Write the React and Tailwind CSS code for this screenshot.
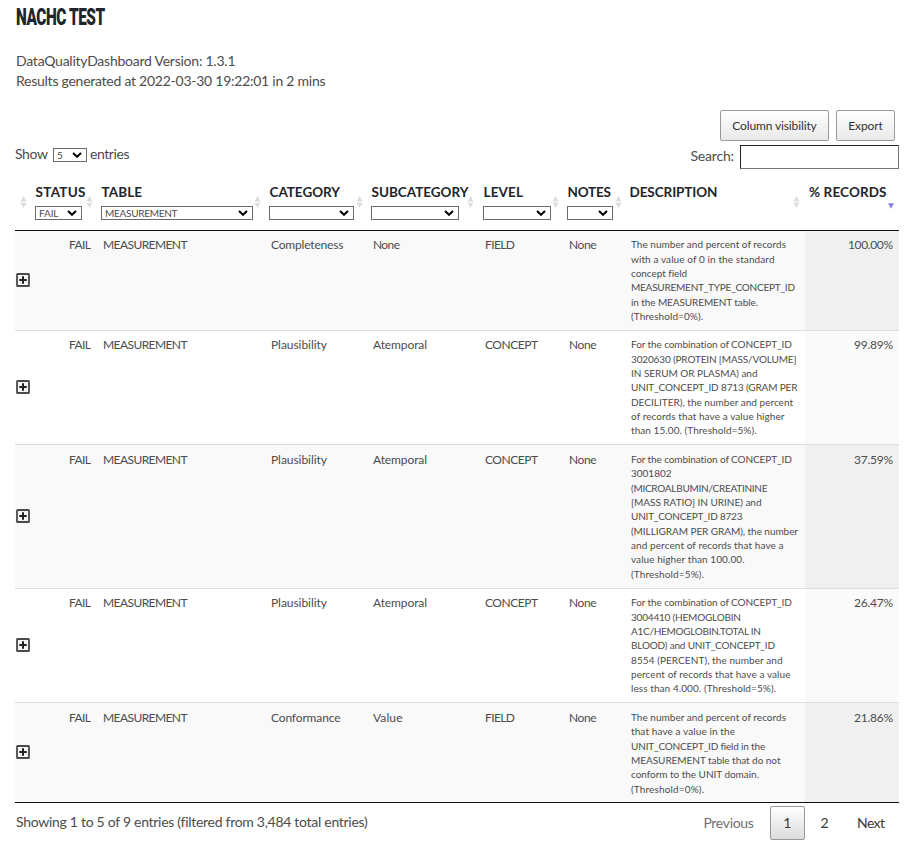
import React, { useLayoutEffect, useRef, useState } from "react";

// Single line of text, tracked so that it spans `w` pixels.
function Fit({ w, children, className = "" }) {
  const ref = useRef(null);
  const [ls, setLs] = useState(0);
  useLayoutEffect(() => {
    const n = String(children).length;
    setLs((w - ref.current.getBoundingClientRect().width) / Math.max(1, n - 1));
  }, []);
  return (
    <span
      ref={ref}
      className={`inline-block whitespace-nowrap ${className}`}
      style={{ letterSpacing: ls + "px", marginRight: -ls + "px" }}
    >
      {children}
    </span>
  );
}

function Select({ value, vw, className }) {
  return (
    <div className={`flex h-[14px] items-center justify-between border border-[#6b6b6b] bg-white pl-[3px] pr-[4px] text-[10px] leading-[12px] text-[#4c4c4c] ${className}`}>
      <span>{value ? <Fit w={vw}>{value}</Fit> : null}</span>
      <svg width="10" height="6" viewBox="0 0 10 6" fill="none" className="shrink-0">
        <path d="M1 1 L5 4.8 L9 1" stroke="#000" strokeWidth="2" />
      </svg>
    </div>
  );
}

function Sort({ className }) {
  return (
    <svg width="7" height="12" viewBox="0 0 7 12" className={`absolute top-[17px] ${className}`}>
      <path d="M3.5 0 L6.5 5.4 H0.5 Z M0.5 6.8 H6.5 L3.5 12 Z" fill="#dcdcdc" />
    </svg>
  );
}

const GRID = "grid grid-cols-[16px_66px_168px_102px_112px_84px_62px_180px_94px]";

const HEAD = [
  { t: "STATUS", w: 50, sel: "w-[47px]", value: "FAIL", vw: 19.5, sort: "right-[4px]" },
  { t: "TABLE", w: 40.5, sel: "w-[152px]", value: "MEASUREMENT", vw: 72.5, sort: "right-[4px]" },
  { t: "CATEGORY", w: 70.5, sel: "w-[85px]", sort: "right-[4px]" },
  { t: "SUBCATEGORY", w: 97, sel: "w-[88px]", sort: "right-[5px]" },
  { t: "LEVEL", w: 39.5, sel: "w-[68px]", sort: "right-[4px]" },
  { t: "NOTES", w: 43.5, sel: "w-[46px]", sort: "right-[3px]" },
  { t: "DESCRIPTION", w: 88, sort: "right-[5px]" },
];

const ROWS = [
  {
    h: "h-[100px]", cat: ["Completeness", 72.5], sub: ["None", 27], level: ["FIELD", 30], pct: ["100.00%", 45],
    desc: [
      ["The number and percent of records", 155],
      ["with a value of 0 in the standard", 143.5],
      ["concept field", 56],
      ["MEASUREMENT_TYPE_CONCEPT_ID", 164],
      ["in the MEASUREMENT table.", 127],
      ["(Threshold=0%).", 72],
    ],
  },
  {
    h: "h-[114px]", cat: ["Plausibility", 56], sub: ["Atemporal", 54], level: ["CONCEPT", 53], pct: ["99.89%", 39],
    desc: [
      ["For the combination of CONCEPT_ID", 161],
      ["3020630 (PROTEIN [MASS/VOLUME]", 165.5],
      ["IN SERUM OR PLASMA) and", 126.5],
      ["UNIT_CONCEPT_ID 8713 (GRAM PER", 166.5],
      ["DECILITER), the number and percent", 162],
      ["of records that have a value higher", 153.5],
      ["than 15.00. (Threshold=5%).", 125.5],
    ],
  },
  {
    h: "h-[144px]", low: true, cat: ["Plausibility", 56], sub: ["Atemporal", 54], level: ["CONCEPT", 53], pct: ["37.59%", 39],
    desc: [
      ["For the combination of CONCEPT_ID", 161],
      ["3001802", 40.5],
      ["(MICROALBUMIN/CREATININE", 136.5],
      ["[MASS RATIO] IN URINE) and", 130.5],
      ["UNIT_CONCEPT_ID 8723", 111.5],
      ["(MILLIGRAM PER GRAM), the number", 167],
      ["and percent of records that have a", 152.5],
      ["value higher than 100.00.", 113.5],
      ["(Threshold=5%).", 73],
    ],
  },
  {
    h: "h-[114px]", cat: ["Plausibility", 56], sub: ["Atemporal", 54], level: ["CONCEPT", 53], pct: ["26.47%", 39],
    desc: [
      ["For the combination of CONCEPT_ID", 161],
      ["3004410 (HEMOGLOBIN", 110],
      ["A1C/HEMOGLOBIN.TOTAL IN", 130],
      ["BLOOD) and UNIT_CONCEPT_ID", 144],
      ["8554 (PERCENT), the number and", 151.5],
      ["percent of records that have a value", 159.5],
      ["less than 4.000. (Threshold=5%).", 145],
    ],
  },
  {
    h: "h-[100px]", low: true, cat: ["Conformance", 69.5], sub: ["Value", 29.5], level: ["FIELD", 30], pct: ["21.86%", 39],
    desc: [
      ["The number and percent of records", 155],
      ["that have a value in the", 104],
      ["UNIT_CONCEPT_ID field in the", 134],
      ["MEASUREMENT table that do not", 149.5],
      ["conform to the UNIT domain.", 128],
      ["(Threshold=0%).", 73],
    ],
  },
];

function Cell({ v, pt }) {
  return (
    <div className={`pl-[6px] ${pt}`}>
      <Fit w={v[1]}>{v[0]}</Fit>
    </div>
  );
}

function Row({ r, i }) {
  const odd = i % 2 === 0;
  const last = i === ROWS.length - 1;
  const pt = r.low ? "pt-[6px]" : "pt-[5px]";
  return (
    <div className={`${GRID} ${r.h} border-b text-[12px] leading-[17px] text-[#4c4c4c] ${last ? "border-[#111]" : "border-[#ddd]"} ${odd ? "bg-[#f9f9f9]" : "bg-white"}`}>
      <div className="flex items-center pb-px pl-px">
        <svg width="14" height="14" viewBox="0 0 14 14" className="shrink-0">
          <rect x="1" y="1" width="12" height="12" rx="0.6" fill="#f4f4f4" stroke="#4a4a4a" strokeWidth="1.8" />
          <path d="M3.3 7 H10.7 M7 3.3 V10.7" stroke="#222" strokeWidth="2" />
        </svg>
      </div>
      <div className={`pr-[6px] text-right ${pt}`}><Fit w={22}>FAIL</Fit></div>
      <Cell v={["MEASUREMENT", 84.5]} pt={pt} />
      <Cell v={r.cat} pt={pt} />
      <Cell v={r.sub} pt={pt} />
      <Cell v={r.level} pt={pt} />
      <Cell v={["None", 27.5]} pt={pt} />
      <div className={`pl-[6px] text-[10px] leading-[14.35px] ${r.low ? "pt-[7px]" : "pt-[6.3px]"}`}>
        {r.desc.map(([t, w]) => (
          <div key={t} className="h-[14.35px]"><Fit w={w}>{t}</Fit></div>
        ))}
      </div>
      <div className={`pr-[6px] text-right ${pt} ${odd ? "bg-[#f0f0f0]" : "bg-[#fafafa]"}`}>
        <Fit w={r.pct[1]}>{r.pct[0]}</Fit>
      </div>
    </div>
  );
}

export default function App() {
  return (
    <div className="h-[858px] w-[906px] overflow-hidden bg-white pl-[15px] font-['Lato',sans-serif] text-[14px] leading-[20px] text-[#4c4c4c]">
      <div className="h-[51px] pl-px pt-[3px]">
        <h1 className="w-[150px] origin-left scale-x-[0.64] whitespace-nowrap font-['Roboto',sans-serif] text-[24px] font-black leading-[29px] text-[#212529]">
          <Fit w={87}>NACHC TEST</Fit>
        </h1>
      </div>
      <div className="h-[59px] pl-px">
        <div className="h-[20px]"><Fit w={219.5}>DataQualityDashboard Version: 1.3.1</Fit></div>
        <div className="h-[20px]"><Fit w={309.5}>Results generated at 2022-03-30 19:22:01 in 2 mins</Fit></div>
      </div>

      <div className="flex h-[69px] w-[884px] justify-between">
        <div className="mt-[35px] flex h-[20px] items-center">
          <span className="pb-[2px]"><Fit w={33}>Show</Fit></span>
          <Select value="5" vw={6} className="ml-[5px] w-[34px]" />
          <span className="ml-[3px] pb-[2px]"><Fit w={39.5}>entries</Fit></span>
        </div>
        <div className="flex flex-col items-end">
          <div className="mr-[4px] flex gap-[7px] text-[12px] text-[#333]">
            <button className="flex h-[31px] w-[109px] items-center justify-center rounded-[2px] border border-[#999] bg-linear-to-b from-white to-[#e9e9e9]"><Fit w={84.5}>Column visibility</Fit></button>
            <button className="flex h-[31px] w-[59px] items-center justify-center rounded-[2px] border border-[#999] bg-linear-to-b from-white to-[#e9e9e9]"><Fit w={34.5}>Export</Fit></button>
          </div>
          <div className="mt-[4px] flex items-center">
            <span className="pb-[2px]"><Fit w={43.5}>Search:</Fit></span>
            <div className="ml-[6px] h-[24px] w-[159px] border border-b-[#767676] border-l-[#222] border-r-[#767676] border-t-[#222] bg-white" />
          </div>
        </div>
      </div>

      <div className="w-[884px]">
        <div className={`${GRID} h-[52px] border-b border-[#111] text-[13.5px] font-bold leading-[20px] text-[#212529]`}>
          <div className="relative"><Sort className="right-[4px]" /></div>
          {HEAD.map((h) => (
            <div key={h.t} className="relative pl-[4px] pt-[3px]">
              <div className="h-[24px] pl-[0.5px]"><Fit w={h.w}>{h.t}</Fit></div>
              {h.sel ? <Select value={h.value} vw={h.vw} className={`font-normal ${h.sel}`} /> : null}
              <Sort className={h.sort} />
            </div>
          ))}
          <div className="relative pl-[4px] pt-[3px]">
            <Fit w={77.5}>% RECORDS</Fit>
            <svg width="6" height="6" viewBox="0 0 6 6" className="absolute right-[5px] top-[24px]">
              <path d="M0 0.2 H6 L3 5.8 Z" fill="#8080e0" />
            </svg>
          </div>
        </div>
        {ROWS.map((r, i) => <Row key={i} r={r} i={i} />)}
      </div>

      <div className="flex h-[44px] w-[884px] justify-between">
        <div className="pl-px pt-[9px]"><Fit w={351.5}>Showing 1 to 5 of 9 entries (filtered from 3,484 total entries)</Fit></div>
        <div className="mt-[3px] flex h-[34px] items-center text-[#3a3a3a]">
          <span className="text-[#707070]"><Fit w={50.5}>Previous</Fit></span>
          <div className="ml-[16px] flex h-[34px] w-[35px] items-center justify-center rounded-[2px] border border-[#979797] bg-linear-to-b from-white to-[#dcdcdc]">1</div>
          <span className="ml-[15.5px]">2</span>
          <span className="ml-[28.5px] mr-[14px]"><Fit w={28}>Next</Fit></span>
        </div>
      </div>
    </div>
  );
}
